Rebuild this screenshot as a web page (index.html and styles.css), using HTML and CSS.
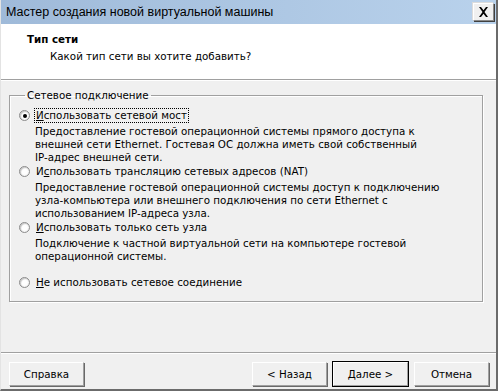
FILE: index.html
```html
<!DOCTYPE html>
<html lang="ru">
<head>
  <meta charset="UTF-8" />
  <title>Мастер создания новой виртуальной машины</title>
  <link rel="stylesheet" href="styles.css">
</head>
<body>
  <div class="window">
    <div class="titlebar">
      <span class="title">Мастер создания новой виртуальной машины</span>
      <button class="close" aria-label="Закрыть">
        <svg width="11" height="10" viewBox="0 0 11 10">
          <path d="M1 0h2l2.5 3.2L8 0h2L6.5 5 10 10H8L5.5 6.8 3 10H1l3.5-5z" fill="#000"/>
        </svg>
      </button>
    </div>

    <div class="header">
      <h1>Тип сети</h1>
      <p>Какой тип сети вы хотите добавить?</p>
    </div>

    <div class="content">
      <fieldset class="group">
        <legend>Сетевое подключение</legend>

        <div class="option">
          <span class="radio checked"></span>
          <div class="option-text">
            <span class="label focused"><u>И</u>спользовать сетевой мост</span>
            <p>Предоставление гостевой операционной системы прямого доступа к<br>внешней сети Ethernet. Гостевая ОС должна иметь свой собственный<br>IP-адрес внешней сети.</p>
          </div>
        </div>

        <div class="option">
          <span class="radio"></span>
          <div class="option-text">
            <span class="label">И<u>с</u>пользовать трансляцию сетевых адресов (NAT)</span>
            <p>Предоставление гостевой операционной системы доступ к подключению<br>узла-компьютера или внешнего подключения по сети Ethernet с<br>использованием IP-адреса узла.</p>
          </div>
        </div>

        <div class="option">
          <span class="radio"></span>
          <div class="option-text">
            <span class="label"><u>И</u>спользовать только сеть узла</span>
            <p>Подключение к частной виртуальной сети на компьютере гостевой<br>операционной системы.</p>
          </div>
        </div>

        <div class="option last">
          <span class="radio"></span>
          <div class="option-text">
            <span class="label"><u>Н</u>е использовать сетевое соединение</span>
          </div>
        </div>
      </fieldset>
    </div>

    <div class="footer">
      <button class="btn">Справка</button>
      <div class="spacer"></div>
      <button class="btn">&lt; Назад</button>
      <button class="btn default"><u>Д</u>алее &gt;</button>
      <button class="btn">Отмена</button>
    </div>
  </div>
</body>
</html>
```

FILE: styles.css
```css
* {
  margin: 0;
  padding: 0;
  box-sizing: border-box;
}
body {
  font-family: 'DejaVu Sans', 'Liberation Sans', sans-serif;
  font-size: 10.3px;
  color: #000;
  background: #f0f0f0;
}
.window {
  width: 498px;
  height: 391px;
  display: flex;
  flex-direction: column;
  background: #f0f0f0;
  border-left: 1px solid #e3e3e3;
  border-right: 2px solid #6b6b6b;
  border-bottom: 2px solid #6b6b6b;
}
.titlebar {
  height: 24px;
  display: flex;
  align-items: center;
  justify-content: space-between;
  padding: 0 2px 0 5px;
  background: linear-gradient(to right, #9fbad9, #b9d2ec);
}
.title {
  font-family: 'Liberation Sans', sans-serif;
  font-size: 12.5px;
  color: #000;
}
.close {
  width: 21px;
  height: 18px;
  display: flex;
  align-items: center;
  justify-content: center;
  background: #f0f0f0;
  border: 1px solid;
  border-color: #fff #8a8a8a #8a8a8a #fff;
  box-shadow: 1px 1px 0 #404040, -1px -1px 0 #dcdcdc;
}
.header {
  height: 56px;
  background: #fff;
  padding: 9px 0 0 26px;
  border-bottom: 1px solid #a0a0a0;
  box-shadow: 0 1px 0 #fff;
}
.header h1 {
  font-size: 10.3px;
  font-weight: bold;
  line-height: 13px;
}
.header p {
  margin: 4px 0 0 23px;
  line-height: 13px;
}
.content {
  flex: 1;
  padding: 9px 13px 0 8px;
}
.group {
  height: 213px;
  border: 1px solid #a0a0a0;
  box-shadow: inset 1px 1px 0 #fff, 1px 1px 0 #fff;
  padding: 7px 0 0 9px;
}
.group legend {
  padding: 0 2px;
  margin-left: 6px;
  line-height: 13px;
}
.option {
  display: flex;
  align-items: flex-start;
  gap: 5px;
  margin-bottom: 1px;
}
.option.last {
  margin-top: 13px;
}
.radio {
  width: 11px;
  height: 11px;
  margin-top: 1px;
  border-radius: 50%;
  border: 1px solid #8c8c8c;
  background: radial-gradient(circle, #fff 40%, #e4e4e4);
  box-shadow: inset 1px 1px 1px #c8c8c8;
  position: relative;
  flex-shrink: 0;
}
.radio.checked::after {
  content: '';
  position: absolute;
  left: 2.5px;
  top: 2.5px;
  width: 4px;
  height: 4px;
  border-radius: 50%;
  background: #000;
}
.label {
  display: inline-block;
  line-height: 13px;
  padding: 0 1px;
}
.label.focused {
  outline: 1px dotted #000;
}
.option-text p {
  margin-top: 3px;
  line-height: 13px;
}
.footer {
  height: 37px;
  display: flex;
  align-items: flex-start;
  gap: 6px;
  padding: 9px 7px 0 8px;
  border-top: 1px solid #a0a0a0;
  box-shadow: inset 0 1px 0 #fff;
}
.spacer {
  flex: 1;
}
.btn {
  width: 75px;
  height: 24px;
  font-family: inherit;
  font-size: 10.3px;
  background: #f0f0f0;
  border: 1px solid;
  border-color: #fff #a0a0a0 #a0a0a0 #fff;
  box-shadow: 1px 1px 0 #696969;
}
.btn.default {
  outline: 1px solid #000;
}
```
